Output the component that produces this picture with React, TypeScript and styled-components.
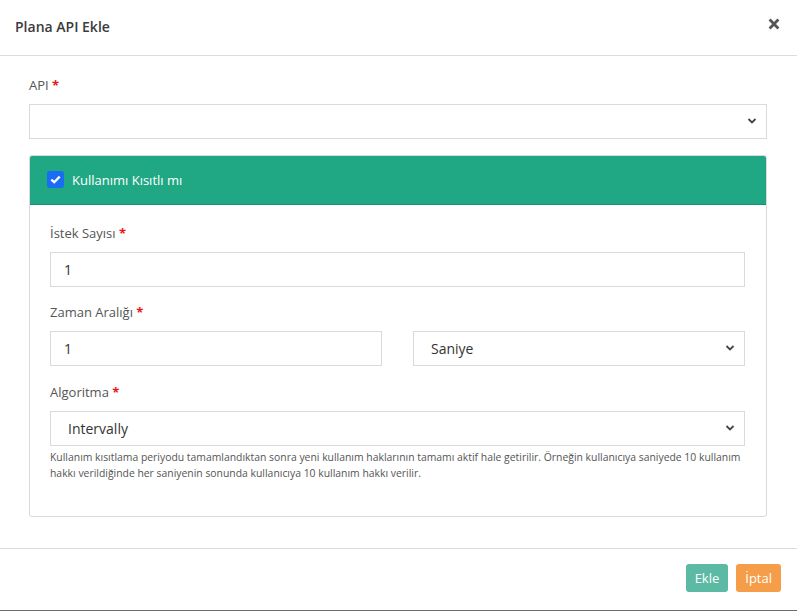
import React from "react";
import styled, { createGlobalStyle } from "styled-components";

const GlobalStyle = createGlobalStyle`
  html, body {
    margin: 0;
    padding: 0;
    background: #fff;
    font-family: "Open Sans", "Liberation Sans", sans-serif;
  }
  * { box-sizing: border-box; }
`;

const Modal = styled.div`
  width: 797px;
  height: 611px;
  background: #fff;
  display: flex;
  flex-direction: column;
  border-bottom: 1px solid #6b6b6b;
`;

const Header = styled.div`
  height: 56px;
  display: flex;
  align-items: center;
  justify-content: space-between;
  padding: 0 17px 1px 15px;
  border-bottom: 1px solid #dcdcdc;
`;

const Title = styled.h4`
  margin: 0;
  font-size: 14px;
  font-weight: 600;
  color: #3b3b3b;
`;

const Close = styled.button`
  border: none;
  background: none;
  padding: 0;
  margin-top: -5px;
  width: 12px;
  height: 12px;
  display: flex;
  align-items: center;
  justify-content: center;
  cursor: pointer;
`;

const Body = styled.div`
  flex: 1;
  padding: 20px 30px 31px 29px;
  border-bottom: 1px solid #dcdcdc;
`;

const Label = styled.label`
  display: block;
  font-size: 13px;
  line-height: 18px;
  color: #555;
  margin-bottom: 10px;
`;

const Star = styled.span`
  color: #e8141b;
  font-weight: 700;
`;

const Field = styled.div<{ $mb?: number }>`
  margin-bottom: ${(p) => p.$mb ?? 16}px;
`;

const Input = styled.input`
  display: block;
  width: 100%;
  height: 35px;
  border: 1px solid #dadada;
  border-radius: 0;
  padding: 0 13px;
  font-family: inherit;
  font-size: 14px;
  color: #333;
  outline: none;
`;

const SelectBox = styled.div`
  position: relative;
  height: 35px;
  border: 1px solid #dadada;
  display: flex;
  align-items: center;
  padding: 0 17px;
  font-size: 14px;
  color: #333;
`;

const Chevron = styled.svg`
  position: absolute;
  right: 9px;
  top: 50%;
  margin-top: -4px;
`;

const Panel = styled.div`
  border: 1px solid #d9d9d9;
  border-radius: 3px;
  overflow: hidden;
`;

const PanelHead = styled.div`
  height: 49px;
  background: #20a884;
  border-bottom: 1px solid #1b8f70;
  display: flex;
  align-items: center;
  padding: 0 17px 0 17px;
  gap: 8px;
  color: #fff;
  font-size: 13px;
`;

const Check = styled.span`
  width: 17px;
  height: 17px;
  border-radius: 3px;
  background: #1a6cf5;
  display: flex;
  align-items: center;
  justify-content: center;
`;

const PanelBody = styled.div`
  padding: 19px 21px 35px 20px;
`;

const Row = styled.div`
  display: grid;
  grid-template-columns: 1fr 1fr;
  gap: 31px;
`;

const Help = styled.p`
  margin: 3px 0 0;
  font-size: 10.4px;
  line-height: 16px;
  color: #555;
`;

const Footer = styled.div`
  height: 62px;
  display: flex;
  align-items: center;
  justify-content: flex-end;
  padding: 0 16px 2px;
  gap: 8px;
`;

const Button = styled.button<{ $color: string }>`
  height: 28px;
  padding: 0 9px;
  border: none;
  border-radius: 3px;
  background: ${(p) => p.$color};
  color: #fff;
  font-family: inherit;
  font-size: 13px;
  cursor: pointer;
`;

const Select = ({ value }: { value?: string }) => (
  <SelectBox>
    {value}
    <Chevron width="10" height="8" viewBox="0 0 10 8">
      <path d="M1.5 2 L5 5.5 L8.5 2" fill="none" stroke="#444" strokeWidth="1.8" />
    </Chevron>
  </SelectBox>
);

export default function App() {
  return (
    <>
      <GlobalStyle />
      <Modal>
        <Header>
          <Title>Plana API Ekle</Title>
          <Close aria-label="Kapat">
            <svg width="12" height="12" viewBox="0 0 12 12">
              <path d="M1.6 1.6 L10.4 10.4 M10.4 1.6 L1.6 10.4" stroke="#555" strokeWidth="2.8" />
            </svg>
          </Close>
        </Header>
        <Body>
          <Field>
            <Label>
              API <Star>*</Star>
            </Label>
            <Select />
          </Field>
          <Panel>
            <PanelHead>
              <Check>
                <svg width="11" height="9" viewBox="0 0 11 9">
                  <path d="M1.3 4.6 L4.2 7.2 L9.7 1.6" fill="none" stroke="#fff" strokeWidth="2.3" />
                </svg>
              </Check>
              Kullanımı Kısıtlı mı
            </PanelHead>
            <PanelBody>
              <Field>
                <Label>
                  İstek Sayısı <Star>*</Star>
                </Label>
                <Input defaultValue="1" />
              </Field>
              <Field $mb={17}>
                <Label>
                  Zaman Aralığı <Star>*</Star>
                </Label>
                <Row>
                  <Input defaultValue="1" />
                  <Select value="Saniye" />
                </Row>
              </Field>
              <Field $mb={0}>
                <Label>
                  Algoritma <Star>*</Star>
                </Label>
                <Select value="Intervally" />
                <Help>
                  Kullanım kısıtlama periyodu tamamlandıktan sonra yeni kullanım haklarının tamamı aktif hale getirilir. Örneğin kullanıcıya saniyede 10 kullanım hakkı verildiğinde her saniyenin sonunda kullanıcıya 10 kullanım hakkı verilir.
                </Help>
              </Field>
            </PanelBody>
          </Panel>
        </Body>
        <Footer>
          <Button $color="#5cbaa4">Ekle</Button>
          <Button $color="#f59d48">İptal</Button>
        </Footer>
      </Modal>
    </>
  );
}
